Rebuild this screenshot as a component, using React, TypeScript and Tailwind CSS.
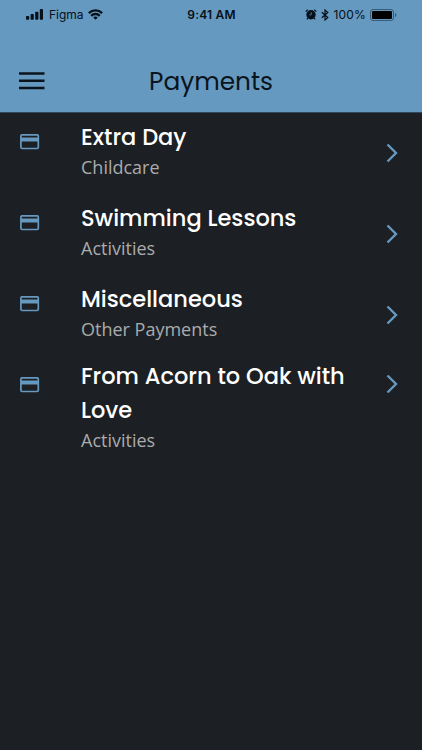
import clsx from 'clsx';

interface Payment {
  lines: string[];
  category: string;
}

const payments: Payment[] = [
  { lines: ['Extra Day'], category: 'Childcare' },
  { lines: ['Swimming Lessons'], category: 'Activities' },
  { lines: ['Miscellaneous'], category: 'Other Payments' },
  { lines: ['From Acorn to Oak with', 'Love'], category: 'Activities' },
];

function CardIcon() {
  return (
    <svg width="20" height="16" viewBox="0 0 20 16" fill="none">
      <rect x="0.9" y="0.8" width="17.4" height="13.7" rx="1.2" stroke="#6699bf" strokeWidth="1.7" />
      <path d="M1 3.5h17.3v4H1z" fill="#6699bf" />
    </svg>
  );
}

function ChevronIcon() {
  return (
    <svg width="12" height="20" viewBox="0 0 12 20" fill="none">
      <path d="M1.5 1.5l8.5 8.5-8.5 8.5" stroke="#6699bf" strokeWidth="2.4" />
    </svg>
  );
}

function StatusBar() {
  return (
    <div className="flex h-[29px] items-center px-[26px] text-[12px] text-[#05101a]">
      <div className="flex flex-1 items-center">
        <svg width="17" height="11" viewBox="0 0 17 11" fill="currentColor">
          <rect x="0" y="7" width="3.2" height="3.8" rx="0.8" />
          <rect x="4.6" y="5" width="3.2" height="5.8" rx="0.8" />
          <rect x="9.2" y="2.7" width="3.2" height="8.1" rx="0.8" />
          <rect x="13.8" y="0" width="3.2" height="10.8" rx="0.8" />
        </svg>
        <span className="ml-[6px]">Figma</span>
        <svg className="ml-[4px]" width="15" height="11" viewBox="0 0 14 10" fill="none" stroke="currentColor" strokeWidth="2.2">
          <path d="M0.8 3.7a8.900 8.900 0 0 1 12.400 0" />
          <path d="M3 6.2a5.700 5.700 0 0 1 8 0" />
          <path d="M4.900 7.900a3 3 0 0 1 4.200 0L7 10z" fill="currentColor" stroke="none" />
        </svg>
      </div>
      <span className="text-[12px] font-semibold tracking-[0.2px]">9:41 AM</span>
      <div className="-mr-[1px] flex flex-1 items-center justify-end">
        <svg width="12" height="11" viewBox="0 0 12 11" fill="currentColor">
          <circle cx="6" cy="5.7" r="4.7" />
          <path d="M0.700 2.600L2.700 0.800M11.300 2.600L9.300 0.800M2.900 9l-1 1.400M9.100 9l1 1.400" stroke="currentColor" strokeWidth="1.2" />
          <path d="M6.200 3.200v2.700H4.500" stroke="#6699bf" strokeWidth="0.7" fill="none" />
        </svg>
        <svg className="ml-[4px]" width="8" height="12" viewBox="0 0 8 12" fill="none" stroke="currentColor" strokeWidth="1.2">
          <path d="M0.800 3.200l6 5.400L4 11V1l2.800 2.400-6 5.400" />
        </svg>
        <span className="ml-[4px] tracking-[0.2px]">100%</span>
        <svg className="ml-[4px]" width="27" height="12" viewBox="0 0 27 12" fill="none">
          <rect x="0.5" y="0.5" width="23" height="11" rx="2.6" stroke="#05101a" strokeOpacity="0.45" />
          <rect x="2" y="2" width="20" height="8" rx="1.3" fill="#000" />
          <path d="M25 4v4c.8-.3 1.400-1 1.400-2S25.800 4.300 25 4z" fill="#05101a" fillOpacity="0.45" />
        </svg>
      </div>
    </div>
  );
}

function PaymentRow({ payment }: { payment: Payment }) {
  const tall = payment.lines.length > 1;

  return (
    <button className={clsx('flex w-full items-start pl-5 pr-6 text-left', tall ? 'h-[108px]' : 'h-[81px]')}>
      <div className="w-[61px] pt-[21px]">
        <CardIcon />
      </div>
      <div className={clsx('min-w-0 flex-1', tall ? 'pt-[3px]' : 'pt-[7px]')}>
        <h2 className="font-['Poppins',sans-serif] text-[22.5px] leading-[34px] font-medium text-white">
          {payment.lines.map((line) => (
            <span key={line} className="block whitespace-nowrap">{line}</span>
          ))}
        </h2>
        <p className="mt-px font-['Open_Sans',sans-serif] text-[18px] leading-[25px] text-[#aaabac]">{payment.category}</p>
      </div>
      <div className={clsx('shrink-0', tall ? 'pt-[18px]' : 'pt-[30px]')}>
        <ChevronIcon />
      </div>
    </button>
  );
}

export default function App() {
  return (
    <div className="flex h-[750px] w-[422px] flex-col overflow-hidden bg-[#1c1f24] font-['Inter',sans-serif]">
      <header className="h-[113px] shrink-0 border-b border-[#33495b] bg-[#6699bf]">
        <StatusBar />
        <div className="flex h-[83px] items-start px-[19px] pt-[36px]">
          <button className="w-[26px] pt-[7px]">
            <svg width="26" height="18" viewBox="0 0 26 18" fill="#0b141c">
              <path d="M0 0.300h25.500v2.500H0zM0 7.500h25.500v2.500H0zM0 14.700h25.500v2.500H0z" />
            </svg>
          </button>
          <h1 className="flex-1 pr-[26px] text-center font-['Poppins',sans-serif] text-[24.8px] leading-[34px] text-[#0b141c]">
            Payments
          </h1>
        </div>
      </header>
      <main className="flex flex-col">
        {payments.map((payment) => (
          <PaymentRow key={payment.lines[0]} payment={payment} />
        ))}
      </main>
    </div>
  );
}
